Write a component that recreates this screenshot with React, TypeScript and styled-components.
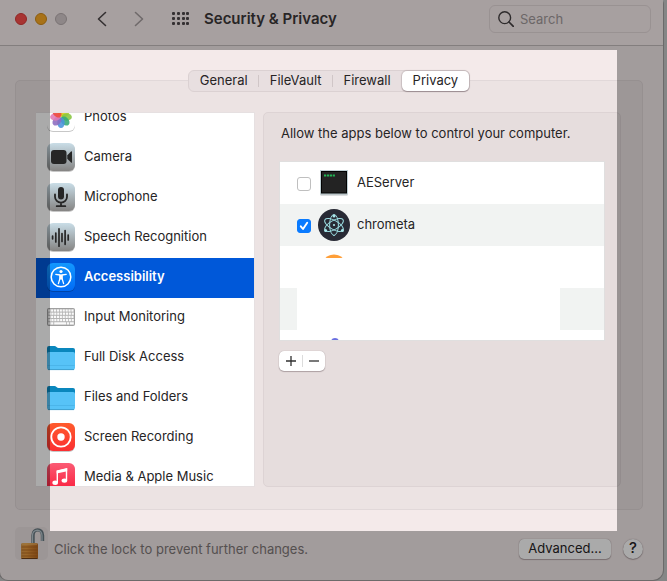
import React from "react";
import styled, { createGlobalStyle, css } from "styled-components";

const GlobalStyle = createGlobalStyle`
  *, *::before, *::after { box-sizing: border-box; }
  body {
    margin: 0;
    background: #c8c9c9;
    color: #262425;
    font: 13px/16px Inter, "Liberation Sans", sans-serif;
  }
  button, input { font: inherit; color: inherit; }
  h1, p, ul { margin: 0; padding: 0; }
  svg { display: block; flex: none; }
`;

const Screen = styled.div`
  position: relative;
  display: flex;
  min-height: 100vh;
  padding: 0 4px 1px 0;
  overflow: hidden;
`;

const Window = styled.main`
  flex: 1;
  min-width: 0;
  display: flex;
  flex-direction: column;
  background: #f4eaea;
  border-radius: 0 4px 10px 8px;
  box-shadow: 0 0 0 1px #a3a0a0;
`;

const Spotlight = styled.div`
  position: absolute;
  inset: 50px;
  box-shadow: 0 0 0 9999px rgba(0, 0, 0, 0.335);
  pointer-events: none;
`;

const TitleBar = styled.header`
  display: flex;
  align-items: flex-start;
  height: 46px;
  padding: 5px 12px 0 15px;
  background: #fbf0f0;
  border-bottom: 1px solid #c5bdbd;
`;

const TitleGroup = styled.div`
  display: flex;
  align-items: center;
  height: 28px;
`;

const Lights = styled.div`
  display: flex;
  gap: 8px;
  margin-right: 27px;
`;

const Light = styled.button<{ $fill: string; $edge: string }>`
  width: 12px;
  height: 12px;
  padding: 0;
  border: 1px solid ${(p) => p.$edge};
  border-radius: 50%;
  background: ${(p) => p.$fill};
`;

const ToolButton = styled.button<{ $gap: number; $faded?: boolean }>`
  display: grid;
  place-items: center;
  height: 24px;
  margin-right: ${(p) => p.$gap}px;
  padding: 0;
  border: 0;
  background: none;
  color: ${(p) => (p.$faded ? "#a79fa0" : "#4f494b")};
`;

const Title = styled.h1`
  font-size: 15px;
  line-height: 20px;
  font-weight: 600;
  color: #3c383a;
  white-space: nowrap;
`;

const SearchBox = styled.label`
  display: flex;
  align-items: center;
  gap: 6px;
  width: 162px;
  height: 28px;
  margin-left: auto;
  padding: 0 8px;
  border: 1px solid #e6dbdc;
  border-radius: 6px;
  color: #464143;
`;

const SearchInput = styled.input`
  width: 100%;
  min-width: 0;
  padding: 0;
  border: 0;
  outline: 0;
  background: none;
  &::placeholder { color: #a39b9c; opacity: 1; }
`;

const Content = styled.div`
  flex: 1;
  display: flex;
  flex-direction: column;
  padding: 24px 20px 17px 15px;
`;

const Tabs = styled.div`
  z-index: 1;
  align-self: center;
  display: flex;
  height: 22px;
  margin-bottom: -12px;
  border: 1px solid #dbd1d2;
  border-radius: 6px;
  background: #e8dfe0;
`;

const Tab = styled.button<{ $active?: boolean; $divided?: boolean }>`
  position: relative;
  padding: 0 11px 2px;
  border: 0;
  background: none;
  line-height: 18px;
  ${(p) =>
    p.$divided &&
    css`
      &::after {
        content: "";
        position: absolute;
        right: 0;
        top: 4px;
        width: 1px;
        height: 12px;
        background: #d0c6c7;
      }
    `}
  ${(p) =>
    p.$active &&
    css`
      border-radius: 5px;
      background: #fff;
      box-shadow: 0 0 1px 1px rgba(60, 40, 45, 0.15), 0 1px 1px rgba(60, 40, 45, 0.3);
    `}
`;

const GroupBox = styled.section`
  flex: 1;
  display: flex;
  gap: 8px;
  padding: 31px 21px 22px 20px;
  border: 1px solid #e1d8d9;
  border-radius: 5px;
  background: #ece3e3;
`;

const Sidebar = styled.nav`
  flex: 0 0 219px;
  height: 375px;
  border: 1px solid #e6e0e1;
  border-width: 1px 1px 1px 0;
  background: #fff;
  overflow: hidden;
`;

const SidebarList = styled.ul`
  margin-top: -15px;
  list-style: none;
`;

const SidebarItem = styled.a<{ $selected?: boolean }>`
  display: flex;
  align-items: center;
  gap: 9px;
  height: 40px;
  padding: 0 11px 2px;
  color: ${(p) => (p.$selected ? "#fff" : "inherit")};
  background: ${(p) => (p.$selected ? "#0058d9" : "none")};
  font-weight: ${(p) => (p.$selected ? 600 : 400)};
  text-decoration: none;
  white-space: nowrap;
`;

const SidebarName = styled.span`
  padding-bottom: 2px;
`;

const Panel = styled.div`
  flex: 1;
  min-width: 0;
  height: 375px;
  padding: 12px 16px 12px 15px;
  border: 1px solid #ddd3d4;
  border-radius: 5px;
  background: #e6dddd;
`;

const PanelText = styled.p`
  padding-left: 2px;
  margin-bottom: 20px;
`;

const AppList = styled.ul`
  position: relative;
  height: 180px;
  margin-right: -1px;
  border: 1px solid #e0dfdf;
  list-style: none;
  background: #fff;
  overflow: hidden;
`;

const AppRow = styled.li`
  display: flex;
  align-items: center;
  height: 42px;
  padding: 0 16px;
  &:nth-child(even) { background: #f1f3f2; }
`;

const PartialRow = styled(AppRow)`
  padding-left: 38px;
`;

const AppLabel = styled.label`
  display: flex;
  align-items: center;
`;

const AppIcon = styled.span`
  display: grid;
  place-items: center;
  width: 34px;
  height: 34px;
  margin: 0 6px;
`;

const AppName = styled.span`
  padding-bottom: 2px;
`;

const Check = styled.input`
  appearance: none;
  width: 14px;
  height: 14px;
  margin: 2px 0 0 1px;
  border: 1px solid #bfbfbf;
  border-radius: 3px;
  background: #fff;
  &:checked {
    border-color: #0a7bff;
    background: #0a7bff
      url("data:image/svg+xml,%3Csvg xmlns='http://www.w3.org/2000/svg' viewBox='0 0 12 12'%3E%3Cpath d='M2.8 6.3 5 9 9.2 2.8' fill='none' stroke='white' stroke-width='1.9' stroke-linecap='round' stroke-linejoin='round'/%3E%3C/svg%3E")
      center / 12px 12px;
  }
`;

const Redaction = styled.div`
  position: absolute;
  left: 17px;
  right: 44px;
  top: 96px;
  bottom: 2px;
  background: #fff;
`;

const Stepper = styled.div`
  display: inline-flex;
  margin-top: 10px;
  border-radius: 5px;
  background: #fff;
  box-shadow: 0 0 1px rgba(60, 40, 45, 0.4), 0 1px 1px rgba(60, 40, 45, 0.3);
`;

const StepButton = styled.button`
  display: grid;
  place-items: center;
  width: 23px;
  height: 20px;
  padding: 0;
  border: 0;
  background: none;
  & + &::before {
    content: "";
    position: absolute;
    width: 1px;
    height: 12px;
    margin-right: 22px;
    background: #dcdcdc;
  }
`;

const Footer = styled.footer`
  display: flex;
  align-items: center;
  height: 53px;
  padding: 0 20px 20px 15px;
`;

const LockButton = styled.button`
  width: 33px;
  height: 33px;
  margin-right: 6px;
  padding: 0;
  border: 0;
  border-radius: 5px;
  background: #eae1e1;
`;

const FooterLine = styled.div`
  flex: 1;
  display: flex;
  align-items: center;
  height: 20px;
  margin-top: 11px;
  gap: 12px;
`;

const LockText = styled.p`
  margin-right: auto;
  color: #7f7878;
`;

const PushButton = styled.button<{ $round?: boolean }>`
  height: 20px;
  padding: 0 0 2px;
  width: ${(p) => (p.$round ? 20 : 92)}px;
  border: 0;
  border-radius: ${(p) => (p.$round ? "50%" : "5px")};
  background: #fff;
  box-shadow: 0 0 1px rgba(60, 40, 45, 0.5), 0 1px 1px rgba(60, 40, 45, 0.3);
  font-size: ${(p) => (p.$round ? 15 : 13)}px;
  font-weight: ${(p) => (p.$round ? 500 : 400)};
  line-height: 18px;
`;

const HiddenDefs = styled.div`
  position: absolute;
  width: 0;
  height: 0;
  overflow: hidden;
`;

const petals = ["#f9a11b", "#d8d52a", "#87c540", "#35ab79", "#4a93dd", "#8b6cc0", "#e079b4", "#ee4b3c"];

const Gradients = () => (
  <svg width="0" height="0" aria-hidden="true">
    <defs>
      <linearGradient id="steel" x2="0" y2="1"><stop stopColor="#c9dde7" /><stop offset="1" stopColor="#858483" /></linearGradient>
      <linearGradient id="azure" x2="0" y2="1"><stop stopColor="#1398ff" /><stop offset="1" stopColor="#006bf7" /></linearGradient>
      <linearGradient id="ember" x2="0" y2="1"><stop stopColor="#ff5b2c" /><stop offset="1" stopColor="#fb2f32" /></linearGradient>
      <linearGradient id="rose" x2="0" y2="1"><stop stopColor="#fb5b74" /><stop offset="1" stopColor="#fa1f3d" /></linearGradient>
      <linearGradient id="brass"><stop stopColor="#d99a4c" /><stop offset=".3" stopColor="#e89b3f" /><stop offset="1" stopColor="#bd6a20" /></linearGradient>
    </defs>
  </svg>
);

const Tile = ({ fill, children }: { fill: string; children: React.ReactNode }) => (
  <svg width="28" height="28" viewBox="0 0 28 28" overflow="visible" aria-hidden="true">
    <rect y="1" width="28" height="28" rx="6" fill="#000" opacity=".22" />
    <rect width="28" height="28" rx="6" fill={fill} />
    {children}
  </svg>
);

const PhotosIcon = () => (
  <Tile fill="#fff">
    {petals.map((c, i) => (
      <ellipse key={c} cx="14" cy="8.3" rx="3.7" ry="5.2" fill={c} opacity=".88" transform={`rotate(${i * 45} 14 14)`} />
    ))}
  </Tile>
);

const CameraIcon = () => (
  <Tile fill="url(#steel)">
    <rect x="4" y="7" width="15.5" height="14" rx="3" fill="#262626" />
    <path d="M20.3 12.2 24 8.4Q25 7.7 25 9v10q0 1.3-1 .6l-3.7-3.8z" fill="#262626" />
  </Tile>
);

const MicIcon = () => (
  <Tile fill="url(#steel)">
    <rect x="11" y="4" width="6" height="12.5" rx="3" fill="#262626" />
    <path d="M8 11.5v2.2a6 6 0 0 0 12 0v-2.2M14 19.8v3.2M9.7 23.2h8.6" fill="none" stroke="#262626" strokeWidth="1.8" strokeLinecap="round" />
  </Tile>
);

const WaveIcon = () => (
  <Tile fill="url(#steel)">
    <path d="M5.6 13.2v2.6M8.8 10v9M12 5.8v17.4M15 10.5v8M18.1 7.5v13.8M21.2 12v5" fill="none" stroke="#262626" strokeWidth="1.7" strokeLinecap="round" />
  </Tile>
);

const AccessIcon = () => (
  <Tile fill="url(#azure)">
    <circle cx="14" cy="14" r="9.8" fill="none" stroke="#fff" strokeWidth="1.5" />
    <circle cx="14" cy="8.5" r="1.6" fill="#fff" />
    <path d="M8.8 11.4 13 12v3.2L11.4 20.6M19.2 11.4 15 12v3.2l1.6 5.4" fill="none" stroke="#fff" strokeWidth="1.3" strokeLinecap="round" strokeLinejoin="round" />
    <path d="M12.4 11.5h3.2v5h-3.2z" fill="#fff" />
  </Tile>
);

const KeyboardIcon = () => (
  <svg width="28" height="18" viewBox="0 0 28 18" aria-hidden="true">
    <rect x=".5" y=".5" width="27" height="17" rx="1" fill="#b4b4b4" stroke="#a0a0a0" />
    {[0, 1, 2, 3].map((r) =>
      Array.from({ length: 9 }, (_, c) => (
        <rect key={`${r}-${c}`} x={1.2 + c * 2.9 + (r % 2 ? 0.3 : 0)} y={1.4 + r * 3.2} width="2.1" height="2.2" fill="#fafafa" />
      ))
    )}
    <path d="M1.2 14.2h2.2v2.2H1.2zM4.1 14.2h2.2v2.2H4.1zM7.2 14.2h12v2.2h-12zM20 14.2h2.2v2.2H20zM23 14.2h3.8v2.2H23z" fill="#fafafa" />
  </svg>
);

const FolderIcon = () => (
  <svg width="28" height="28" viewBox="0 0 28 28" aria-hidden="true">
    <path d="M0 5q0-2 2-2h5.5q1 0 2 1t2 1H26q2 0 2 2v8H0z" fill="#0a87bd" />
    <path d="M0 10.8q0-1.8 1.8-1.8h24.4q1.8 0 1.8 1.8v14q0 2.2-2.2 2.2H2.2Q0 27 0 24.8z" fill="#57c3f7" />
    <path d="M.5 22.5h27" stroke="#4bb5ea" />
    <path d="M1 26.6h26" stroke="#3f9fce" />
  </svg>
);

const RecordIcon = () => (
  <Tile fill="url(#ember)">
    <circle cx="14" cy="14" r="9.7" fill="none" stroke="#fff" strokeWidth="1.8" />
    <circle cx="14" cy="14" r="3.7" fill="#fff" />
  </Tile>
);

const MusicIcon = () => (
  <Tile fill="url(#rose)">
    <path d="M10.3 19.5V8.2l9.2-2v11" fill="none" stroke="#fff" strokeWidth="1.4" />
    <path d="M9.6 7.5 20.2 5v3.3L9.6 10.6z" fill="#fff" />
    <ellipse cx="8.2" cy="19.7" rx="2.8" ry="2.2" fill="#fff" />
    <ellipse cx="17.4" cy="17.6" rx="2.8" ry="2.2" fill="#fff" />
  </Tile>
);

const TerminalIcon = () => (
  <svg width="28" height="26" viewBox="0 0 28 26" aria-hidden="true">
    <rect x=".5" y="1.5" width="27" height="24" fill="#8c9496" opacity=".6" />
    <rect x=".5" y=".5" width="27" height="23.5" fill="#020202" stroke="#c0d0d4" />
    <rect x="2" y="2" width="24" height="20.5" fill="#232323" />
    <path d="M4 5.5h11" stroke="#22b455" strokeWidth="2" strokeDasharray="2.2 .7" />
  </svg>
);

const ElectronIcon = () => (
  <svg width="32" height="32" viewBox="0 0 32 32" aria-hidden="true">
    <circle cx="16" cy="16" r="16" fill="#282a35" />
    <g fill="none" stroke="#9adbe0" strokeWidth="1" strokeLinecap="round">
      {[30, 90, 150].map((a) => (
        <ellipse key={a} cx="16" cy="16" rx="10.5" ry="4.4" transform={`rotate(${a} 16 16)`} />
      ))}
    </g>
    <g fill="#a9e6ea">
      <circle cx="16" cy="16" r="1.1" />
      <circle cx="16" cy="7" r="1.5" />
      <circle cx="7.6" cy="21.5" r="1.5" />
      <circle cx="24.4" cy="21.5" r="1.5" />
    </g>
  </svg>
);

const LockIcon = () => (
  <svg width="33" height="33" viewBox="0 0 33 33" aria-hidden="true">
    <path d="M18 17V8.5C18 1 27.500 1 27.500 8.500V14" fill="none" stroke="#687880" strokeWidth="3.400" />
    <path d="M17.5 17V8.5C17.5 1.5 27 1.5 27 8.5V14" fill="none" stroke="#bac9d0" strokeWidth="1.3" />
    <rect x="6" y="16" width="17" height="16" rx="1.5" fill="url(#brass)" />
    <path d="M7 17h15" stroke="#f3c070" />
    <path d="M6.5 20h16M6.5 23h16M6.5 26h16M6.5 29h16" stroke="#a85d1b" strokeWidth=".7" />
    <path d="M6.5 31.5h16" stroke="#704018" />
  </svg>
);

const categories = [
  { name: "Photos", Icon: PhotosIcon },
  { name: "Camera", Icon: CameraIcon },
  { name: "Microphone", Icon: MicIcon },
  { name: "Speech Recognition", Icon: WaveIcon },
  { name: "Accessibility", Icon: AccessIcon },
  { name: "Input Monitoring", Icon: KeyboardIcon },
  { name: "Full Disk Access", Icon: FolderIcon },
  { name: "Files and Folders", Icon: FolderIcon },
  { name: "Screen Recording", Icon: RecordIcon },
  { name: "Media & Apple Music", Icon: MusicIcon },
];

export default function App() {
  return (
    <Screen>
      <GlobalStyle />
      <HiddenDefs><Gradients /></HiddenDefs>
      <Window>
        <TitleBar>
          <TitleGroup>
            <Lights>
              <Light aria-label="Close" $fill="#fc4f4c" $edge="#d83a38" />
              <Light aria-label="Minimize" $fill="#fdac25" $edge="#d18b18" />
              <Light aria-label="Zoom" $fill="#d5cbcc" $edge="#b8adaf" />
            </Lights>
            <ToolButton aria-label="Back" $gap={22}>
              <svg width="16" height="16" viewBox="0 0 16 16"><path d="M11.5 1.5 4.5 8l7 6.5" fill="none" stroke="currentColor" strokeWidth="1.6" strokeLinecap="round" strokeLinejoin="round" /></svg>
            </ToolButton>
            <ToolButton aria-label="Forward" $gap={24} $faded>
              <svg width="16" height="16" viewBox="0 0 16 16"><path d="m3.5 1.5 7 6.5-7 6.5" fill="none" stroke="currentColor" strokeWidth="1.6" strokeLinecap="round" strokeLinejoin="round" /></svg>
            </ToolButton>
            <ToolButton aria-label="Show all" $gap={14}>
              <svg width="18" height="14" viewBox="0 0 18 14" fill="currentColor">
                {[0, 5, 10].map((y) => [0, 5, 10, 14].map((x) => <rect key={`${x}-${y}`} x={x} y={y} width="3" height="3" rx="1" />))}
              </svg>
            </ToolButton>
            <Title>Security &amp; Privacy</Title>
          </TitleGroup>
          <SearchBox>
            <svg width="16" height="16" viewBox="0 0 16 16" aria-hidden="true"><circle cx="6.7" cy="6.7" r="5.9" fill="none" stroke="currentColor" strokeWidth="1.4" /><path d="m11 11 4.300 4.300" stroke="currentColor" strokeWidth="1.7" strokeLinecap="round" /></svg>
            <SearchInput type="search" placeholder="Search" aria-label="Search" />
          </SearchBox>
        </TitleBar>
        <Content>
          <Tabs role="tablist">
            <Tab role="tab" $divided>General</Tab>
            <Tab role="tab" $divided>FileVault</Tab>
            <Tab role="tab">Firewall</Tab>
            <Tab role="tab" aria-selected="true" $active>Privacy</Tab>
          </Tabs>
          <GroupBox>
            <Sidebar aria-label="Privacy categories">
              <SidebarList>
                {categories.map(({ name, Icon }) => (
                  <li key={name}>
                    <SidebarItem href="#" $selected={name === "Accessibility"}>
                      <Icon />
                      <SidebarName>{name}</SidebarName>
                    </SidebarItem>
                  </li>
                ))}
              </SidebarList>
            </Sidebar>
            <Panel>
              <PanelText>Allow the apps below to control your computer.</PanelText>
              <AppList>
                <AppRow>
                  <AppLabel><Check type="checkbox" /><AppIcon><TerminalIcon /></AppIcon><AppName>AEServer</AppName></AppLabel>
                </AppRow>
                <AppRow>
                  <AppLabel><Check type="checkbox" defaultChecked /><AppIcon><ElectronIcon /></AppIcon><AppName>chrometa</AppName></AppLabel>
                </AppRow>
                <PartialRow>
                  <svg width="32" height="26" viewBox="0 0 32 26" aria-hidden="true"><circle cx="16" cy="13" r="12.5" fill="#ff9f38" /></svg>
                </PartialRow>
                <AppRow />
                <PartialRow>
                  <svg width="34" height="26" viewBox="0 0 34 26" aria-hidden="true"><circle cx="17" cy="4" r="4" fill="#6a6fe0" /></svg>
                </PartialRow>
                <Redaction />
              </AppList>
              <Stepper>
                <StepButton aria-label="Add"><svg width="10" height="10" viewBox="0 0 10 10"><path d="M0 5h10M5 0v10" stroke="#303030" strokeWidth="1.3" /></svg></StepButton>
                <StepButton aria-label="Remove"><svg width="10" height="10" viewBox="0 0 10 10"><path d="M0 5h10" stroke="#303030" strokeWidth="1.3" /></svg></StepButton>
              </Stepper>
            </Panel>
          </GroupBox>
        </Content>
        <Footer>
          <LockButton aria-label="Lock"><LockIcon /></LockButton>
          <FooterLine>
            <LockText>Click the lock to prevent further changes.</LockText>
            <PushButton>Advanced...</PushButton>
            <PushButton $round aria-label="Help">?</PushButton>
          </FooterLine>
        </Footer>
      </Window>
      <Spotlight />
    </Screen>
  );
}
